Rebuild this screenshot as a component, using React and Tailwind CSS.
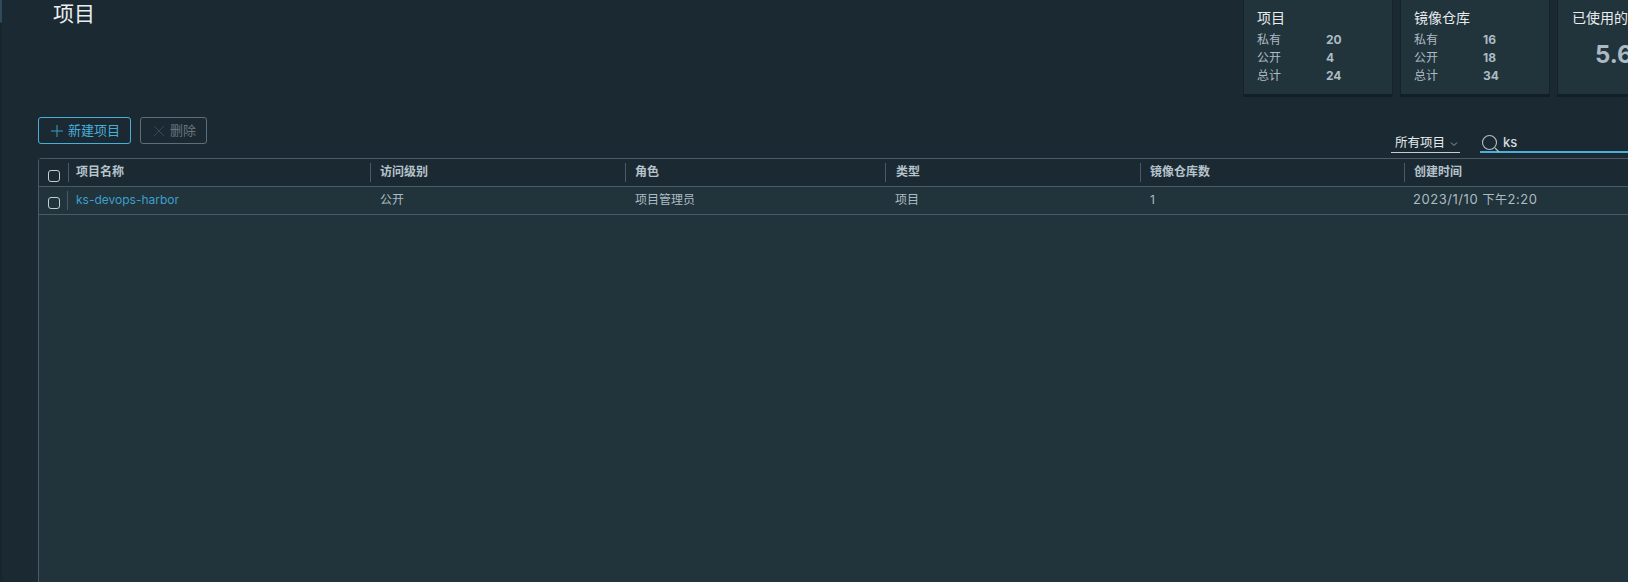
import React from 'react';

const fontStack = "font-['Inter','Noto_Sans_CJK_SC',sans-serif]";

const columns = [
  { name: '项目名称', pad: 'pl-[7px]' },
  { name: '访问级别', pad: 'pl-[9px]' },
  { name: '角色', pad: 'pl-[9px]' },
  { name: '类型', pad: 'pl-[10px]' },
  { name: '镜像仓库数', pad: 'pl-[9px]' },
  { name: '创建时间', pad: 'pl-[9px]' },
];
const gridCols = 'grid grid-cols-[29px_302px_255px_260px_255px_264px_1fr]';

function Checkbox() {
  return <span className="block w-3 h-3 rounded-[3px] border border-[#c3ced4]" />;
}

function StatCard({ title, rows }) {
  return (
    <div className="w-[150px] h-[97px] bg-[#21333b] border-x border-[#16232a] border-b-[3px] border-b-[#131f26] pl-[13px] pt-[8px] shrink-0">
      <div className="text-[14px] leading-[20px] text-[#e9ecef]">{title}</div>
      <div className="mt-[3px]">
        {rows.map(([label, value]) => (
          <div key={label} className="flex h-[18px] items-center text-[12px] text-[#adbbc4]">
            <span className="w-[69px]">{label}</span>
            <span className="font-bold text-[12px]">{value}</span>
          </div>
        ))}
      </div>
    </div>
  );
}

export default function App() {
  return (
    <div className={`flex w-[1628px] h-[582px] overflow-hidden bg-[#1b2a32] ${fontStack}`}>
      {/* Left rail */}
      <div className="w-[2px] shrink-0 bg-[#17252c]">
        <div className="h-[23px] bg-[#2e4a5c] rounded-br-[2px]" />
      </div>

      <main className="flex-1 min-w-0 pl-[36px]">
        {/* Header with stat cards */}
        <div className="flex h-[117px] items-start">
          <h1 className="pl-[15px] text-[21px] leading-[28px] font-normal text-[#eaedf0]">项目</h1>
          <div className="ml-auto flex gap-[7px] w-[385px] shrink-0 overflow-hidden">
            <StatCard title="项目" rows={[['私有', 20], ['公开', 4], ['总计', 24]]} />
            <StatCard title="镜像仓库" rows={[['私有', 16], ['公开', 18], ['总计', 34]]} />
            <div className="w-[150px] h-[97px] bg-[#21333b] border-x border-[#16232a] border-b-[3px] border-b-[#131f26] pl-[14px] pt-[8px] shrink-0">
              <div className="text-[14px] leading-[20px] text-[#e9ecef] whitespace-nowrap">已使用的存储</div>
              <div className="mt-[12px] pl-[23px] text-[24px] leading-[30px] font-bold text-[#acbac3]">5.6GB</div>
            </div>
          </div>
        </div>

        {/* Toolbar */}
        <div className="flex h-[41px] items-start">
          <button className="flex items-center h-[27px] w-[93px] pl-[11px] border border-[#49afd9] rounded-[3px] text-[13px] text-[#49afd9]">
            <svg width="14" height="14" viewBox="0 0 14 14" className="mr-[4px] shrink-0" fill="none" stroke="#3f9cc4" strokeWidth="1">
              <path d="M7 1v12M1 7h12" />
            </svg>
            新建项目
          </button>
          <button className="flex items-center h-[27px] w-[67px] ml-[9px] pl-[12px] border border-[#5f6d76] rounded-[3px] text-[13px] text-[#69757c]">
            <svg width="12" height="12" viewBox="0 0 12 12" className="mr-[5px] shrink-0" fill="none" stroke="#2f4a58" strokeWidth="1">
              <path d="M1 1l10 10M11 1L1 11" />
            </svg>
            删除
          </button>
          <div className="ml-auto flex items-start pt-[17px] w-[237px] shrink-0">
            <div className="flex items-center h-[17px] w-[65px] pl-[4px] pt-[1px] border-b border-[#c3ced4] text-[12.5px] text-[#e6eaed] box-content">
              所有项目
              <svg width="8" height="6" viewBox="0 0 8 6" className="ml-[5px]" fill="none" stroke="#8e9ca5" strokeWidth="1">
                <path d="M1 1.5l3 3 3-3" />
              </svg>
            </div>
            <div className="ml-[20px] flex-1 h-[17px] flex items-center border-b-2 border-[#49afd9] box-content text-[13px] font-medium text-[#d5dde1]">
              <svg width="20" height="20" viewBox="0 0 20 20" className="ml-[1px] mt-[3px] shrink-0" fill="none" stroke="#b3c0c8" strokeWidth="1.1">
                <circle cx="8.5" cy="8.5" r="7" />
                <path d="M14 14l4 4" />
              </svg>
              <span className="ml-[2px]">ks</span>
            </div>
          </div>
        </div>

        {/* Table */}
        <div className="w-[1700px] h-[500px] bg-[#21333b] border border-[#4b5a66] rounded-tl-[3px]">
          <div className={`${gridCols} h-[28px] bg-[#1b2a32] border-b border-[#4b5a66] text-[12px] font-bold text-[#b6c3cb]`}>
            <div className="pl-[9px] pt-[11px]"><Checkbox /></div>
            {columns.map(col => (
              <div key={col.name} className={`flex items-center h-[19px] mt-[4px] pb-[2px] border-l border-[#4b5a66] ${col.pad}`}>{col.name}</div>
            ))}
          </div>
          <div className={`${gridCols} h-[28px] border-b border-[#4b5a66] text-[12px] text-[#adbbc4]`}>
            <div className="pl-[9px] pt-[10px]"><Checkbox /></div>
            <div className="flex items-center h-[19px] mt-[4px] pb-[2px] pl-[8px] -ml-[1px] border-l border-[#4b5a66] text-[#3f9fcd]">ks-devops-harbor</div>
            <div className="pl-[10px] pt-[3px] leading-[19px]">公开</div>
            <div className="pl-[10px] pt-[3px] leading-[19px]">项目管理员</div>
            <div className="pl-[10px] pt-[3px] leading-[19px]">项目</div>
            <div className="pl-[10px] pt-[3px] leading-[19px]">1</div>
            <div className="pl-[9px] pt-[3px] leading-[19px] text-[13px] tracking-[0.55px]">2023/1/10 <span className="text-[12px]">下午</span>2:20</div>
          </div>
        </div>
      </main>
    </div>
  );
}
